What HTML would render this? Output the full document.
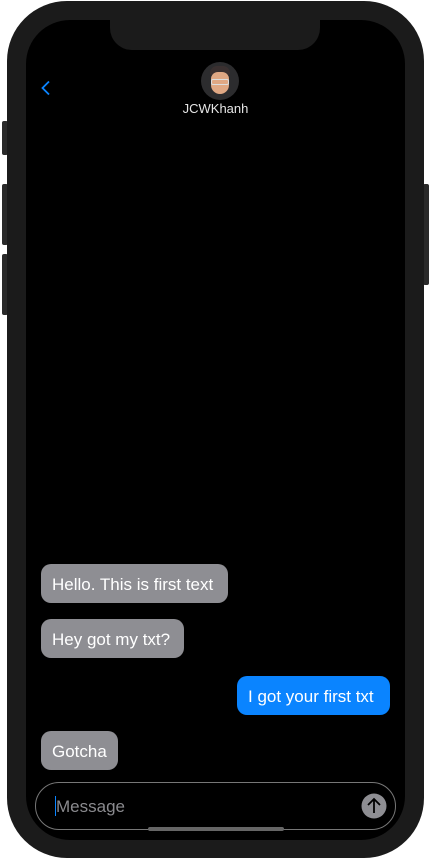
<!DOCTYPE html>
<html><head><style>
body{margin:0;width:430px;height:860px;background:#fff;position:relative;overflow:hidden;font-family:"Liberation Sans",sans-serif}
.btn{position:absolute;background:#2a2a2a;border-radius:2px}
.frame{position:absolute;left:7px;top:1px;width:417px;height:857px;background:#1b1b1b;border-radius:60px}
.screen{position:absolute;left:26px;top:20px;width:379px;height:820px;background:#000;border-radius:44px;overflow:hidden}
.notch{position:absolute;left:84px;top:0;width:210px;height:30px;background:#1b1b1b;border-radius:0 0 22px 22px}
.b{position:absolute;height:39px;line-height:41px;border-radius:10px;color:#fff;font-size:17px;padding:0 11px;box-sizing:border-box;white-space:nowrap}
.g{background:#8e8e93;left:15px}
.blue{background:#0a84ff}
</style></head><body>
<div class="btn" style="left:2px;top:121px;width:6px;height:34px"></div>
<div class="btn" style="left:2px;top:184px;width:6px;height:61px"></div>
<div class="btn" style="left:2px;top:254px;width:6px;height:61px"></div>
<div class="btn" style="left:423px;top:184px;width:6px;height:101px"></div>
<div class="frame"></div>
<div class="screen">
<div class="notch"></div>
<svg style="position:absolute;left:14px;top:60px" width="12" height="16" viewBox="0 0 12 16"><path d="M9 1.5L2.5 8 9 14.5" stroke="#0a84ff" stroke-width="1.8" fill="none"/></svg>
<div style="position:absolute;left:175px;top:42px;width:38px;height:38px;border-radius:50%;background:#2c2c2e;overflow:hidden">
<div style="position:absolute;left:9px;top:4px;width:20px;height:9px;background:#3a3030;border-radius:8px 8px 2px 2px"></div>
<div style="position:absolute;left:10px;top:10px;width:18px;height:22px;background:#e0a884;border-radius:7px 7px 9px 9px"></div>
<div style="position:absolute;left:10px;top:17px;width:18px;height:6px;border:1px solid #ddd;box-sizing:border-box;border-radius:2px"></div>
</div>
<div style="position:absolute;left:0;width:379px;top:81px;text-align:center;color:#e5e5e5;font-size:13px">JCWKhanh</div>
<div class="b g" style="top:544px;width:187px">Hello. This is first text</div>
<div class="b g" style="top:599px;width:143px">Hey got my txt?</div>
<div class="b blue" style="top:656px;left:211px;width:153px">I got your first txt</div>
<div class="b g" style="top:711px;width:77px">Gotcha</div>
<div style="position:absolute;left:9px;top:762px;width:361px;height:48px;border:1px solid #777;border-radius:24px;box-sizing:border-box"></div>
<div style="position:absolute;left:29px;top:776px;width:1px;height:20px;background:#0a84ff"></div>
<div style="position:absolute;left:30px;top:776px;color:#8a8a8e;font-size:17px;line-height:22px">Message</div>
<svg style="position:absolute;left:335px;top:773px" width="26" height="26" viewBox="0 0 26 26"><circle cx="13" cy="13" r="12.5" fill="#8e8e93"/><path d="M13 20V6M7 12l6-6 6 6" stroke="#000" stroke-width="1.8" fill="none"/></svg>
<div style="position:absolute;left:122px;top:807px;width:136px;height:4px;border-radius:2px;background:#666"></div>
</div>
</body></html>
